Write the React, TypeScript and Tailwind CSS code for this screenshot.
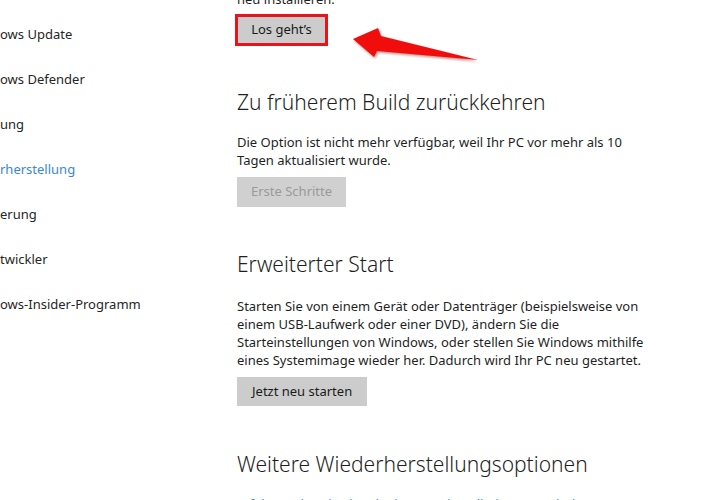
import React from "react";

const font = { fontFamily: '"Noto Sans", "Open Sans", Arial, sans-serif' };

function Arrow() {
  return (
    <svg
      className="absolute left-0 top-0 pointer-events-none"
      width="720"
      height="500"
      viewBox="0 0 720 500"
    >
      <defs>
        <filter id="sh" x="-20%" y="-50%" width="140%" height="200%">
          <feDropShadow dx="1" dy="1.5" stdDeviation="1" floodColor="#7a0000" floodOpacity="0.45" />
        </filter>
      </defs>
      <polygon
        points="353,39 378,28 381,36 478,60 377,51 374,57"
        fill="#f20d0d"
        filter="url(#sh)"
      />
    </svg>
  );
}

export default function App() {
  const side = [
    { t: "ows Update" },
    { t: "ows Defender" },
    { t: "ung" },
    { t: "rherstellung", active: true },
    { t: "erung" },
    { t: "twickler" },
    { t: "ows-Insider-Programm" },
  ];
  return (
    <div className="relative w-[720px] h-[500px] overflow-hidden bg-white flex items-start" style={font}>
      <div className="w-[237px] shrink-0 flex flex-col pt-[12px]">
        {side.map((s) => (
          <div
            key={s.t}
            className={`h-[45px] shrink-0 flex items-center text-[13px] whitespace-nowrap ${s.active ? "text-[#3a87d4]" : "text-[#262626]"}`}
          >
            {s.t}
          </div>
        ))}
      </div>
      <div className="flex flex-col items-start shrink-0 text-[#1f1f1f] -mt-[10px]">
        <p className="text-[13px] leading-[18px]">neu installieren.</p>
        <button className="mt-[8px] h-[28px] w-[89px] shrink-0 bg-[#cccccc] text-[13px] text-[#1a1a1a] outline-[3px] outline-solid outline-[#e8141b] outline-offset-[-1px]">
          Los geht’s
        </button>
        <h2 className="mt-[43px] text-[21px] leading-[30px] font-light text-[#1f1f1f]">
          Zu früherem Build zurückkehren
        </h2>
        <p className="mt-[16px] text-[13px] leading-[18px] w-[440px]">
          Die Option ist nicht mehr verfügbar, weil Ihr PC vor mehr als 10
          <br />
          Tagen aktualisiert wurde.
        </p>
        <button className="mt-[8px] h-[30px] shrink-0 px-[14px] bg-[#d0d0d0] text-[13px] text-[#9a9a9a]">
          Erste Schritte
        </button>
        <h2 className="mt-[42px] text-[21px] leading-[30px] font-light text-[#1f1f1f]">
          Erweiterter Start
        </h2>
        <p className="mt-[18px] text-[13px] leading-[18px] w-[440px]">
          Starten Sie von einem Gerät oder Datenträger (beispielsweise von
          <br />
          einem USB-Laufwerk oder einer DVD), ändern Sie die
          <br />
          Starteinstellungen von Windows, oder stellen Sie Windows mithilfe
          <br />
          eines Systemimage wieder her. Dadurch wird Ihr PC neu gestartet.
        </p>
        <button className="mt-[8px] h-[29px] shrink-0 px-[15px] bg-[#cccccc] text-[13px] text-[#1a1a1a]">
          Jetzt neu starten
        </button>
        <h2 className="mt-[43px] text-[21px] leading-[30px] font-light text-[#1f1f1f]">
          Weitere Wiederherstellungsoptionen
        </h2>
        <p className="mt-[16px] text-[13px] leading-[18px] text-[#3a87d4] w-[400px]">
          Erfahren Sie, wie Sie mit einer Neuinstallation von Windows neu starten
        </p>
      </div>
      <Arrow />
    </div>
  );
}
